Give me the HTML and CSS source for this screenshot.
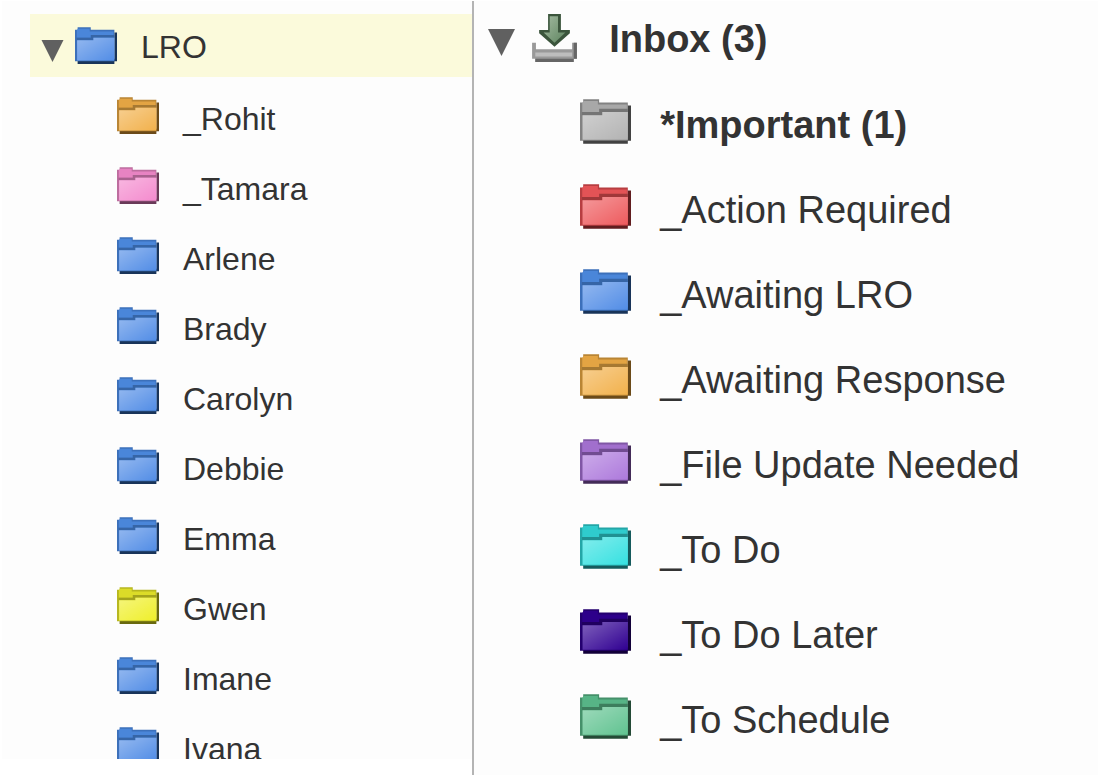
FILE: index.html
```html
<!DOCTYPE html>
<html lang="en">
<head>
    <meta charset="UTF-8">
    <meta name="viewport" content="width=device-width, initial-scale=1.0">
    <title>Mail folders</title>
    <link rel="stylesheet" href="styles.css">
</head>
<body>
    <!-- Shared icons -->
    <svg class="sprite" aria-hidden="true">
        <defs>
            <linearGradient id="shine" x1="0" y1="0" x2="1" y2="1">
                <stop offset="0" stop-color="#fff" stop-opacity="0.38"/>
                <stop offset="1" stop-color="#fff" stop-opacity="0"/>
            </linearGradient>
            <linearGradient id="arrow-fill" x1="0" y1="0" x2="1" y2="1">
                <stop offset="0" stop-color="#a3baa1"/>
                <stop offset="1" stop-color="#5f8560"/>
            </linearGradient>
        </defs>
        <symbol id="folder" viewBox="0 0 16 14">
            <path class="f-dark" d="M1 12h14V2h1v11h-1v1H1z"/>
            <path class="f-edge" d="M0 1h1V0h5v1h9v12H0z"/>
            <path class="f-back" d="M.7 1H1V.6h4.600V1.700h9.100V4H.7z"/>
            <path class="f-line" d="M.6 4H6V3h9v1H7v1H.6z"/>
            <path class="f-front" d="M.8 5H7V4h8v8.700H.8z"/>
            <path fill="url(#shine)" d="M.8 5H7V4h8v8.700H.8z"/>
        </symbol>
        <symbol id="inbox" viewBox="0 0 14 15">
            <path fill="#999" d="M0 9h1.200v2h11.300V9H14v5h-1v1H1v-1H0z"/>
            <path fill="#bdbdbd" d="M1 12h11.500v1.300H1z"/>
            <path fill="#666" d="M1 14h12v1H1zM13 9h1v5h-1z"/>
            <path fill="#3b553c" d="M5 0h4v5h2.800v1L7 10.200 2.200 6V5H5z"/>
            <path fill="url(#arrow-fill)" d="M5.500.7h2.600v5.100h2.300L7 9 3.600 5.800h1.900z"/>
        </symbol>
        <symbol id="triangle" viewBox="0 0 10 10">
            <path fill="#606060" d="M0 0h10L5 10z"/>
        </symbol>
    </svg>

    <main class="panes">
        <nav class="pane pane-small" aria-label="LRO folders">
            <div class="row parent selected">
                <button type="button" class="toggle" aria-label="Collapse LRO" aria-expanded="true"><svg><use href="#triangle"/></svg></button>
                <a href="#lro" class="blue"><svg class="icon"><use href="#folder"/></svg><span>LRO</span></a>
            </div>
            <ul>
                <li class="row"><a href="#rohit" class="orange"><svg class="icon"><use href="#folder"/></svg><span>_Rohit</span></a></li>
                <li class="row"><a href="#tamara" class="pink"><svg class="icon"><use href="#folder"/></svg><span>_Tamara</span></a></li>
                <li class="row"><a href="#arlene" class="blue"><svg class="icon"><use href="#folder"/></svg><span>Arlene</span></a></li>
                <li class="row"><a href="#brady" class="blue"><svg class="icon"><use href="#folder"/></svg><span>Brady</span></a></li>
                <li class="row"><a href="#carolyn" class="blue"><svg class="icon"><use href="#folder"/></svg><span>Carolyn</span></a></li>
                <li class="row"><a href="#debbie" class="blue"><svg class="icon"><use href="#folder"/></svg><span>Debbie</span></a></li>
                <li class="row"><a href="#emma" class="blue"><svg class="icon"><use href="#folder"/></svg><span>Emma</span></a></li>
                <li class="row"><a href="#gwen" class="yellow"><svg class="icon"><use href="#folder"/></svg><span>Gwen</span></a></li>
                <li class="row"><a href="#imane" class="blue"><svg class="icon"><use href="#folder"/></svg><span>Imane</span></a></li>
                <li class="row"><a href="#ivana" class="blue"><svg class="icon"><use href="#folder"/></svg><span>Ivana</span></a></li>
            </ul>
        </nav>

        <nav class="pane pane-large" aria-label="Inbox folders">
            <div class="row parent unread">
                <button type="button" class="toggle" aria-label="Collapse Inbox" aria-expanded="true"><svg><use href="#triangle"/></svg></button>
                <a href="#inbox-folder"><svg class="icon icon-inbox"><use href="#inbox"/></svg><span>Inbox (3)</span></a>
            </div>
            <ul>
                <li class="row unread"><a href="#important" class="gray"><svg class="icon"><use href="#folder"/></svg><span>*Important (1)</span></a></li>
                <li class="row"><a href="#action" class="red"><svg class="icon"><use href="#folder"/></svg><span>_Action Required</span></a></li>
                <li class="row"><a href="#awaiting-lro" class="blue"><svg class="icon"><use href="#folder"/></svg><span>_Awaiting LRO</span></a></li>
                <li class="row"><a href="#awaiting-response" class="orange"><svg class="icon"><use href="#folder"/></svg><span>_Awaiting Response</span></a></li>
                <li class="row"><a href="#file-update" class="purple"><svg class="icon"><use href="#folder"/></svg><span>_File Update Needed</span></a></li>
                <li class="row"><a href="#todo" class="cyan"><svg class="icon"><use href="#folder"/></svg><span>_To Do</span></a></li>
                <li class="row"><a href="#todo-later" class="indigo"><svg class="icon"><use href="#folder"/></svg><span>_To Do Later</span></a></li>
                <li class="row"><a href="#schedule" class="green"><svg class="icon"><use href="#folder"/></svg><span>_To Schedule</span></a></li>
            </ul>
        </nav>
    </main>
</body>
</html>
```

FILE: styles.css
```css
* {
    margin: 0;
    padding: 0;
    box-sizing: border-box;
}
body {
    background-color: #fff;
    color: #333;
    font-family: "Liberation Sans", Arial, sans-serif;
}
.sprite {
    position: absolute;
    width: 0;
    height: 0;
}
.panes {
    display: grid;
    grid-template-columns: 429fr 571fr;
    height: 99vh;
    padding: 1px 2px 0;
}
.pane {
    min-width: 0;
    overflow: hidden;
    background-color: #fdfdfd;
    white-space: nowrap;
}
.pane ul {
    list-style: none;
}
.row, .row a {
    display: flex;
    align-items: center;
}
.row a {
    color: inherit;
    text-decoration: none;
}
.row span {
    padding-top: 8px;
}
.parent span {
    padding-top: 4px;
}
.toggle {
    display: flex;
    border: none;
    background: none;
    cursor: pointer;
}
.toggle svg {
    width: 100%;
    height: 100%;
}
.unread {
    font-weight: bold;
}
.selected {
    background-color: #fbfadb;
}

/* Left pane */
.pane-small {
    margin-bottom: 16px;
    padding: 13px 0 0 28px;
    font-size: 32px;
}
.pane-small .row {
    height: 70px;
    padding-left: 87px;
}
.pane-small .parent {
    height: 63px;
    margin-bottom: 3px;
    padding-left: 11px;
}
.pane-small .row a {
    gap: 24px;
}
.pane-small .toggle {
    width: 23px;
    height: 22px;
    margin: 10px 11px 0 0;
}
.pane-small .icon {
    width: 42px;
    height: 37px;
}

/* Right pane */
.pane-large {
    border-left: 2px solid #b4b4b4;
    font-size: 38px;
}
.pane-large .row {
    height: 85px;
    padding-left: 106px;
}
.pane-large .parent {
    height: 73px;
    margin-bottom: 5px;
    padding-left: 14px;
}
.pane-large .row a {
    gap: 29px;
}
.pane-large .parent a {
    gap: 32px;
}
.pane-large .toggle {
    width: 27px;
    height: 27px;
    margin: 10px 17px 0 0;
}
.pane-large .icon {
    width: 51px;
    height: 45px;
}
.pane-large .icon-inbox {
    width: 45px;
    height: 48px;
}

/* Folder parts */
.f-dark { fill: var(--dark); }
.f-edge { fill: var(--edge); }
.f-back { fill: var(--back); }
.f-line { fill: var(--line); }
.f-front { fill: var(--front); }

.blue { --dark: #193459; --edge: #3c70ba; --back: #4a86d9; --line: #3665a6; --front: #528de6; }
.orange { --dark: #6b4a19; --edge: #b98535; --back: #e3a443; --line: #a67932; --front: #f2b14c; }
.pink { --dark: #693a58; --edge: #bd6d9f; --back: #e783c2; --line: #a8618e; --front: #f48bce; }
.yellow { --dark: #69690f; --edge: #b7b720; --back: #dcdc28; --line: #a3a31d; --front: #efef2b; }
.gray { --dark: #424242; --edge: #828282; --back: #a8a8a8; --line: #757575; --front: #b3b3b3; }
.red { --dark: #611d1f; --edge: #b73e41; --back: #e35356; --line: #a0383a; --front: #ee5b5e; }
.purple { --dark: #432b58; --edge: #8057a5; --back: #a16fcd; --line: #714c91; --front: #ad79dc; }
.cyan { --dark: #155b5d; --edge: #24a6a7; --back: #2fcccd; --line: #209192; --front: #36e1e1; }
.indigo { --dark: #120039; --edge: #24006f; --back: #2d008a; --line: #20005f; --front: #300092; }
.green { --dark: #244a36; --edge: #45906a; --back: #57b486; --line: #3d7e5d; --front: #61c391; }
```
